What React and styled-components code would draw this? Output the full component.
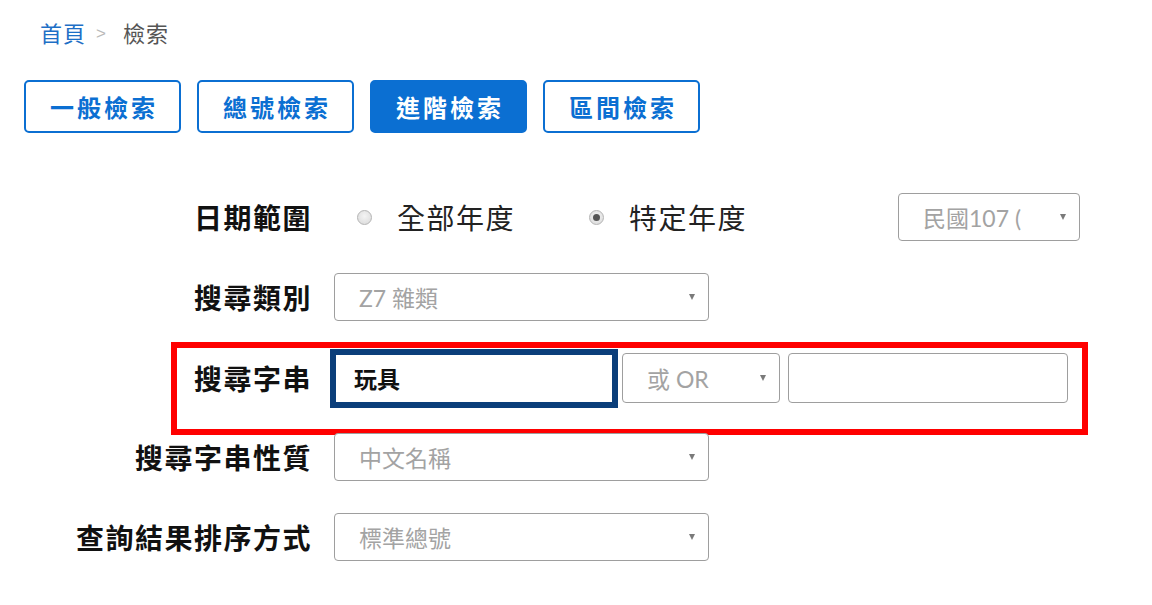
import React from 'react';
import styled, { createGlobalStyle } from 'styled-components';

const GlobalStyle = createGlobalStyle`
	body {
		margin: 0;
		background: #fff;
		font-family: Lato, "Noto Sans CJK TC", sans-serif;
	}
`;

const Page = styled.div`
	width: 1152px;
	height: 605px;
	overflow: hidden;
`;

const Breadcrumb = styled.nav`
	display: flex;
	align-items: center;
	gap: 10px;
	padding: 19px 0 0 40px;
	height: 30px;
	font-size: 22px;
	line-height: 30px;
`;

const Crumb = styled.span`
	color: ${p => p.$link ? '#1e6fc6' : '#555'};
	letter-spacing: 1px;
`;

const Sep = styled.span`
	color: #b9b9b9;
	font-family: "Liberation Sans", sans-serif;
	font-size: 17px;
	margin: 0 7px 0 0;
`;

const Tabs = styled.div`
	display: flex;
	gap: 16px;
	margin: 31px 0 0 24px;
`;

const Tab = styled.button`
	width: 157px;
	height: 53px;
	border: 2px solid #0b6fd2;
	border-radius: 5px;
	background: ${p => p.$active ? '#0b6fd2' : '#fff'};
	color: ${p => p.$active ? '#fff' : '#0b6fd2'};
	font-family: "Noto Sans CJK TC", sans-serif;
	font-size: 24px;
	font-weight: 700;
	letter-spacing: 3px;
	padding: 0 0 0 3px;
	cursor: pointer;
`;

const Form = styled.div`
	display: flex;
	flex-direction: column;
	gap: 32px;
	margin-top: 60px;
`;

const Row = styled.div`
	position: relative;
	display: flex;
	align-items: center;
	height: ${p => p.$tall ? '50px' : '48px'};
	margin-bottom: ${p => p.$tall ? '-2px' : '0'};
`;

const Label = styled.label`
	width: 312px;
	flex: none;
	margin-right: 22px;
	text-align: right;
	font-family: "Noto Sans CJK TC", sans-serif;
	font-size: 28px;
	font-weight: 700;
	letter-spacing: 1.5px;
	color: #111;
	white-space: nowrap;
`;

const Radio = styled.span`
	display: inline-block;
	flex: none;
	width: 15px;
	height: 15px;
	border-radius: 50%;
	border: 1px solid #b4b4b4;
	background: radial-gradient(circle at 50% 40%, #f4f4f4 0%, #d8d8d8 100%);
	box-sizing: border-box;
	position: relative;
	margin: 0 25px 0 ${p => p.$first ? '23px' : '74px'};

	&::after {
		content: '';
		display: ${p => p.$checked ? 'block' : 'none'};
		position: absolute;
		left: 3px;
		top: 3px;
		width: 7px;
		height: 7px;
		border-radius: 50%;
		background: #555;
	}
`;

const RadioText = styled.span`
	font-family: "Noto Sans CJK TC", sans-serif;
	font-size: 28px;
	letter-spacing: 1.5px;
	color: #222;
`;

const Select = styled.div`
	display: flex;
	align-items: center;
	justify-content: space-between;
	box-sizing: border-box;
	width: ${p => p.$w}px;
	height: 100%;
	margin-left: ${p => p.$ml || 0}px;
	padding: 0 13px 0 24px;
	border: 1px solid #9e9e9e;
	border-radius: 4px;
	background: #fff;
	color: #a3a3a3;
	font-size: 23px;
	white-space: nowrap;
	overflow: hidden;
`;

const Arrow = styled.span`
	width: 0;
	height: 0;
	flex: none;
	border-left: 3.5px solid transparent;
	border-right: 3.5px solid transparent;
	border-top: 6px solid #7a7a7a;
`;

const FocusInput = styled.div`
	display: flex;
	align-items: center;
	box-sizing: border-box;
	width: 288px;
	height: 59px;
	margin: 0 4px 0 -4px;
	padding-left: 18px;
	border: 6px solid #0b3e7a;
	background: #fff;
	font-family: "Noto Sans CJK TC", sans-serif;
	font-size: 23px;
	font-weight: 700;
	color: #111;
`;

const TextBox = styled.div`
	box-sizing: border-box;
	width: 280px;
	height: 100%;
	margin-left: 8px;
	border: 1px solid #9e9e9e;
	border-radius: 4px;
	background: #fff;
`;

const Highlight = styled.div`
	position: absolute;
	left: 171px;
	top: -11px;
	width: 917px;
	height: 93px;
	box-sizing: border-box;
	border: 6px solid #f00;
	pointer-events: none;
`;

const Choice = ({ value, w, ml }) => (
	<Select $w={w} $ml={ml}>
		<span>{value}</span>
		<Arrow />
	</Select>
);

export default function App() {
	return (
		<Page>
			<GlobalStyle />
			<Breadcrumb>
				<Crumb $link>首頁</Crumb>
				<Sep>&gt;</Sep>
				<Crumb>檢索</Crumb>
			</Breadcrumb>
			<Tabs>
				<Tab>一般檢索</Tab>
				<Tab>總號檢索</Tab>
				<Tab $active>進階檢索</Tab>
				<Tab>區間檢索</Tab>
			</Tabs>
			<Form>
				<Row>
					<Label>日期範圍</Label>
					<Radio $first />
					<RadioText>全部年度</RadioText>
					<Radio $checked />
					<RadioText>特定年度</RadioText>
					<Choice value="民國107 (" w={182} ml={151} />
				</Row>
				<Row>
					<Label>搜尋類別</Label>
					<Choice value="Z7 雜類" w={375} />
				</Row>
				<Row $tall>
					<Label>搜尋字串</Label>
					<FocusInput>玩具</FocusInput>
					<Choice value="或 OR" w={158} />
					<TextBox />
					<Highlight />
				</Row>
				<Row>
					<Label>搜尋字串性質</Label>
					<Choice value="中文名稱" w={375} />
				</Row>
				<Row>
					<Label>查詢結果排序方式</Label>
					<Choice value="標準總號" w={375} />
				</Row>
			</Form>
		</Page>
	);
}
